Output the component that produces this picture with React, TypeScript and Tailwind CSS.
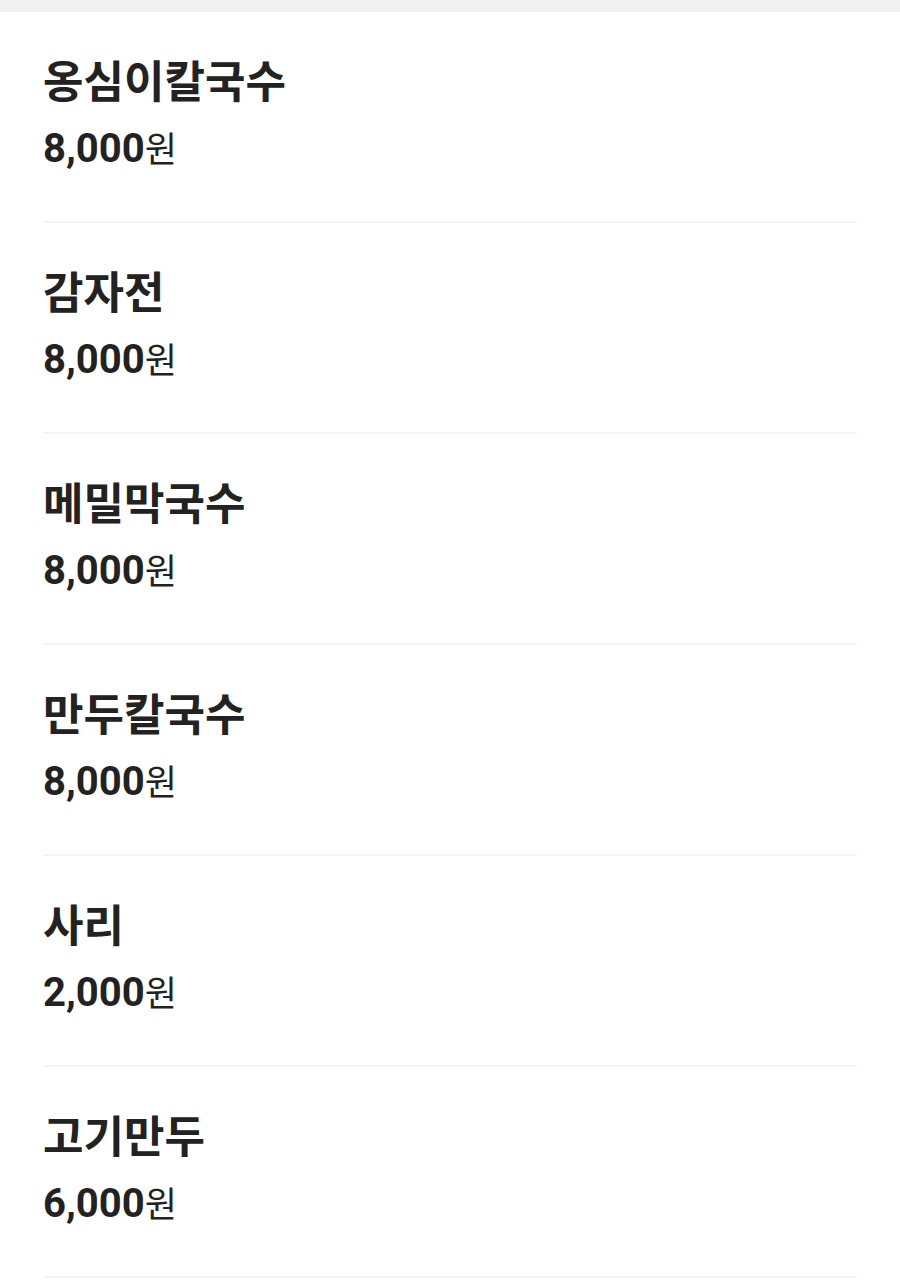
import React from "react";

const items = [
  { name: "옹심이칼국수", price: "8,000" },
  { name: "감자전", price: "8,000" },
  { name: "메밀막국수", price: "8,000" },
  { name: "만두칼국수", price: "8,000" },
  { name: "사리", price: "2,000" },
  { name: "고기만두", price: "6,000" },
];

export default function App() {
  return (
    <div
      className="min-h-[1287px] bg-white text-[#222222]"
      style={{ fontFamily: '"Noto Sans CJK KR", "Noto Sans", sans-serif' }}
    >
      <div className="h-[12px] bg-[#f0f0f0]" />
      <ul className="px-[43px]">
        {items.map((it) => (
          <li key={it.name} className="pt-[37px] pb-[42px] border-b-2 border-[#f4f4f4]">
            <div className="h-[60px] flex items-center text-[44px] leading-none font-bold">{it.name}</div>
            <div className="mt-[10px] h-[60px] flex items-center">
              <div className="flex items-baseline leading-none">
                <span className="text-[40px] font-bold" style={{ fontFamily: 'Roboto, "Noto Sans CJK KR", sans-serif' }}>{it.price}</span>
                <span className="text-[35px] font-normal">원</span>
              </div>
            </div>
          </li>
        ))}
      </ul>
    </div>
  );
}
